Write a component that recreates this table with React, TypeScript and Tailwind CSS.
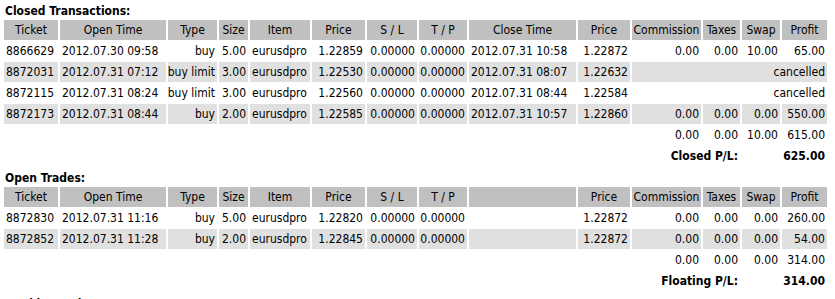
import React from "react";

const GRID =
  "grid grid-cols-[54px_106px_49px_29px_60px_53px_50px_48px_107px_52px_69px_37px_38px_45px] auto-rows-[20px] gap-x-[2px] gap-y-[1px]";

const ALIGN = ["l", "l", "r", "r", "l", "r", "r", "r", "l", "r", "r", "r", "r", "r"] as const;

function HeaderRow({ labels }: { labels: string[] }) {
  return (
    <>
      {labels.map((l, i) => (
        <div key={i} className="bg-[#c0c0c0] px-[2px] flex items-center justify-center whitespace-nowrap">
          {l}
        </div>
      ))}
    </>
  );
}

function DataRow({ cells, gray }: { cells: string[]; gray: boolean }) {
  const bg = gray ? "bg-[#e0e0e0]" : "bg-white";
  const out: React.ReactNode[] = [];
  cells.forEach((c, i) => {
    if (c === "cancelled") {
      out.push(
        <div key={i} className={`${bg} col-span-4 px-[2px] flex items-center justify-end whitespace-nowrap`}>
          cancelled
        </div>
      );
      return;
    }
    const a = ALIGN[i];
    out.push(
      <div
        key={i}
        className={`${bg} px-[2px] flex items-center whitespace-nowrap ${a === "l" ? "justify-start" : "justify-end"}`}
      >
        {c}
      </div>
    );
  });
  return <>{out}</>;
}

function Totals({ v }: { v: string[] }) {
  return (
    <>
      {v.map((x, i) => (
        <div
          key={i}
          className={`${i === 0 ? "col-start-11" : ""} px-[2px] flex items-center justify-end whitespace-nowrap`}
        >
          {x}
        </div>
      ))}
    </>
  );
}

function PL({ label, value }: { label: string; value: string }) {
  return (
    <>
      <div className="col-start-10 col-span-3 px-[2px] flex items-center justify-end whitespace-nowrap font-bold">
        {label}
      </div>
      <div className="col-span-2 px-[2px] flex items-center justify-end whitespace-nowrap font-bold">{value}</div>
    </>
  );
}

const HEAD = [
  "Ticket",
  "Open Time",
  "Type",
  "Size",
  "Item",
  "Price",
  "S / L",
  "T / P",
  "Close Time",
  "Price",
  "Commission",
  "Taxes",
  "Swap",
  "Profit",
];

const closed: string[][] = [
  ["8866629", "2012.07.30 09:58", "buy", "5.00", "eurusdpro", "1.22859", "0.00000", "0.00000", "2012.07.31 10:58", "1.22872", "0.00", "0.00", "10.00", "65.00"],
  ["8872031", "2012.07.31 07:12", "buy limit", "3.00", "eurusdpro", "1.22530", "0.00000", "0.00000", "2012.07.31 08:07", "1.22632", "cancelled"],
  ["8872115", "2012.07.31 08:24", "buy limit", "3.00", "eurusdpro", "1.22560", "0.00000", "0.00000", "2012.07.31 08:44", "1.22584", "cancelled"],
  ["8872173", "2012.07.31 08:44", "buy", "2.00", "eurusdpro", "1.22585", "0.00000", "0.00000", "2012.07.31 10:57", "1.22860", "0.00", "0.00", "0.00", "550.00"],
];

const open: string[][] = [
  ["8872830", "2012.07.31 11:16", "buy", "5.00", "eurusdpro", "1.22820", "0.00000", "0.00000", "", "1.22872", "0.00", "0.00", "0.00", "260.00"],
  ["8872852", "2012.07.31 11:28", "buy", "2.00", "eurusdpro", "1.22845", "0.00000", "0.00000", "", "1.22872", "0.00", "0.00", "0.00", "54.00"],
];

export default function App() {
  return (
    <div
      className="w-[835px] h-[299px] overflow-hidden bg-white text-black pl-[4px] text-[12px] font-stretch-condensed"
      style={{ fontFamily: '"DejaVu Sans", Tahoma, sans-serif' }}
    >
      <div className="pt-[3px] h-[20px] leading-[17px] font-bold pl-[1px]">Closed Transactions:</div>
      <div className={GRID}>
        <HeaderRow labels={HEAD} />
        {closed.map((r, i) => (
          <DataRow key={i} cells={r} gray={i % 2 === 1} />
        ))}
        <Totals v={["0.00", "0.00", "10.00", "615.00"]} />
        <PL label="Closed P/L:" value="625.00" />
      </div>
      <div className="mt-[4px] h-[17px] leading-[17px] font-bold pl-[1px]">Open Trades:</div>
      <div className={GRID}>
        <HeaderRow labels={HEAD.map((h, i) => (i === 8 ? "" : h))} />
        {open.map((r, i) => (
          <DataRow key={i} cells={r} gray={i % 2 === 1} />
        ))}
        <Totals v={["0.00", "0.00", "0.00", "314.00"]} />
        <PL label="Floating P/L:" value="314.00" />
      </div>
      <div className="pt-[7px] h-[20px] leading-[13px] font-bold pl-[1px]">Working Orders:</div>
    </div>
  );
}
